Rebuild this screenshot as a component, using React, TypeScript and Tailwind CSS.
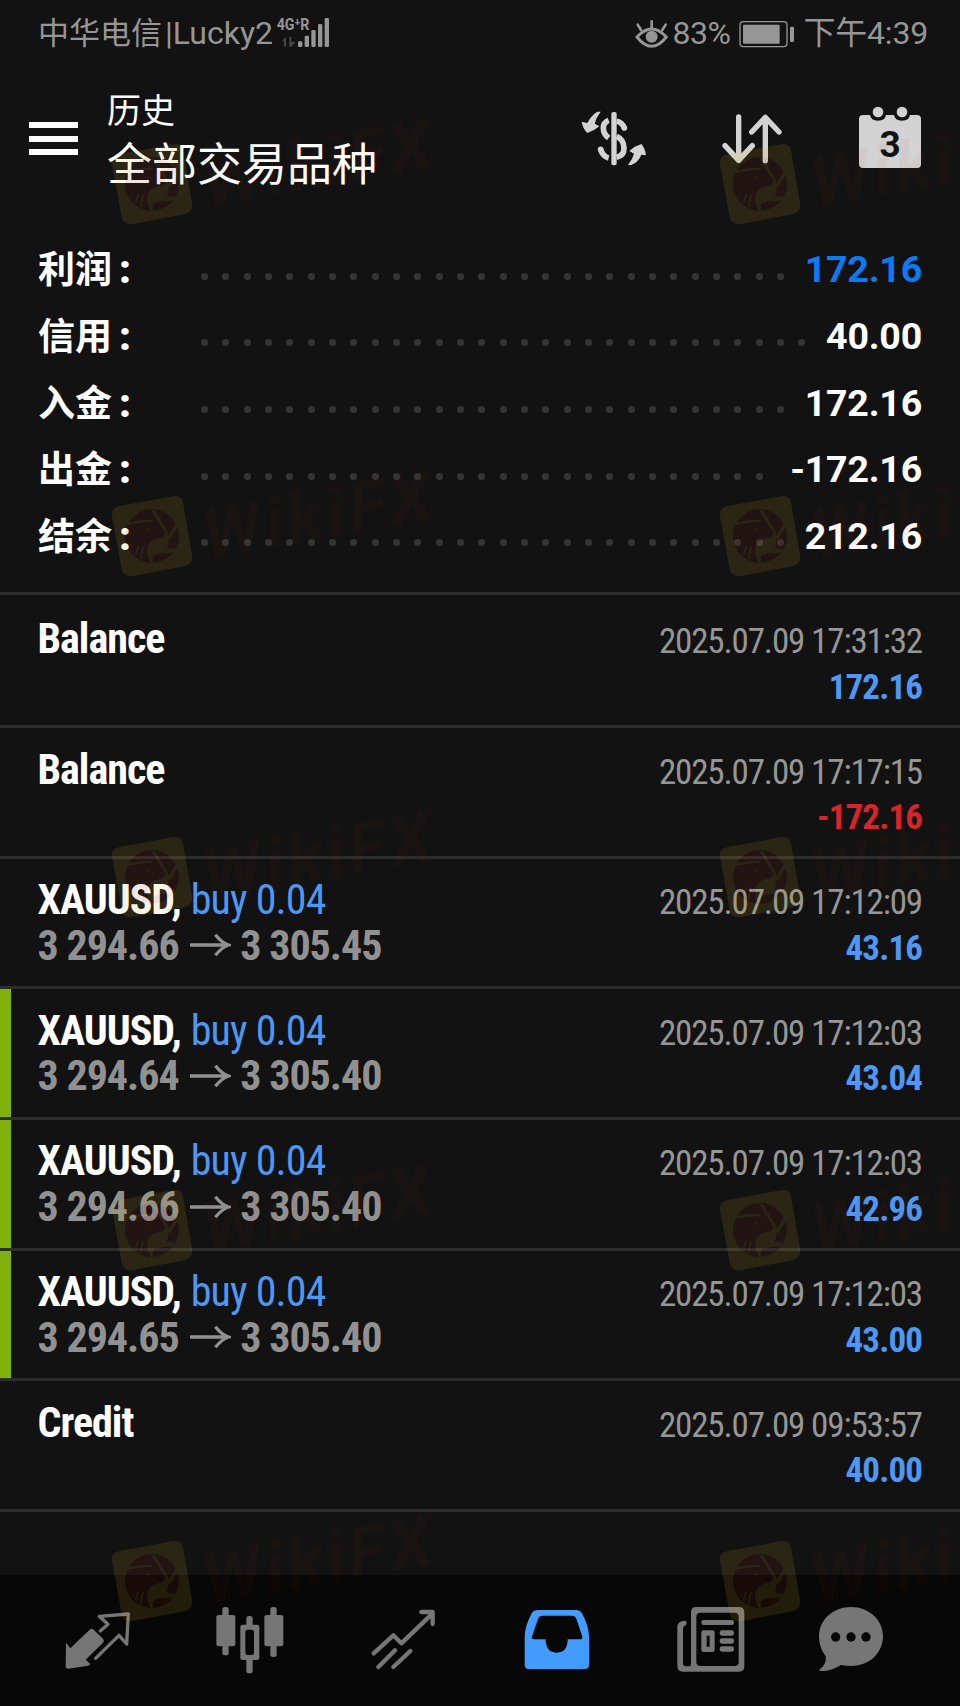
import type { ReactNode } from 'react';
import { clsx } from 'clsx';

type SummaryRow = { label: string; value: string; accent?: boolean };

type Deal = {
  name: string;
  side?: string;
  from?: string;
  to?: string;
  time: string;
  amount: string;
  marked?: boolean;
};

const SUMMARY: SummaryRow[] = [
  { label: '利润', value: '172.16', accent: true },
  { label: '信用', value: '40.00' },
  { label: '入金', value: '172.16' },
  { label: '出金', value: '-172.16' },
  { label: '结余', value: '212.16' },
];

const DEALS: Deal[] = [
  { name: 'Balance', time: '2025.07.09 17:31:32', amount: '172.16' },
  { name: 'Balance', time: '2025.07.09 17:17:15', amount: '-172.16' },
  {
    name: 'XAUUSD,',
    side: 'buy 0.04',
    from: '3 294.66',
    to: '3 305.45',
    time: '2025.07.09 17:12:09',
    amount: '43.16',
  },
  {
    name: 'XAUUSD,',
    side: 'buy 0.04',
    from: '3 294.64',
    to: '3 305.40',
    time: '2025.07.09 17:12:03',
    amount: '43.04',
    marked: true,
  },
  {
    name: 'XAUUSD,',
    side: 'buy 0.04',
    from: '3 294.66',
    to: '3 305.40',
    time: '2025.07.09 17:12:03',
    amount: '42.96',
    marked: true,
  },
  {
    name: 'XAUUSD,',
    side: 'buy 0.04',
    from: '3 294.65',
    to: '3 305.40',
    time: '2025.07.09 17:12:03',
    amount: '43.00',
    marked: true,
  },
  { name: 'Credit', time: '2025.07.09 09:53:57', amount: '40.00' },
];

// top-left corners of the repeated watermark
const MARKS = [144, 496, 837, 1190, 1541].flatMap((top) => [
  { left: 112, top },
  { left: 720, top },
]);

function StatusBar() {
  return (
    <div className="flex h-[67px] items-center pl-[38px] pr-[32px] text-[32px] leading-[67px] text-[#969696]">
      <span className="whitespace-nowrap">
        <span className="mr-[3px] text-[31px]">中华电信</span>|Lucky2
      </span>
      <svg className="ml-[3px] h-[40px] w-[54px] shrink-0" viewBox="828 40 162 120" fill="currentColor">
        <text
          x="830"
          y="89"
          fontSize="50"
          fontWeight="700"
          textLength="98"
          lengthAdjust="spacingAndGlyphs"
        >
          4G⁺R
        </text>
        <path d="M846 122l12-14v30h-6v-16zM868 108h6v16h13l-13 14h-6z" fill="#454545" />
        <rect x="894" y="122" width="13" height="17" rx="4" />
        <rect x="914" y="105" width="13" height="34" rx="4" />
        <rect x="934" y="88" width="13" height="51" rx="4" />
        <rect x="954" y="70" width="13" height="69" rx="4" />
        <rect x="974" y="52" width="13" height="87" rx="4" />
      </svg>
      <div className="flex-1" />
      <svg className="h-[30px] w-[33px]" viewBox="462 53 99 90" fill="none" stroke="currentColor">
        <path d="M468 107q44-48 88 0q-44 56-88 0z" strokeWidth="9" />
        <path d="M512 60v20M470 70l10 16M554 70l-10 16" strokeWidth="8" strokeLinecap="round" />
        <circle cx="512" cy="106" r="18" fill="currentColor" stroke="none" />
      </svg>
      <span className="ml-[5px] tracking-[-0.5px]">83%</span>
      <svg className="ml-[9px] h-[28px] w-[56px]" viewBox="776 54 168 84" fill="currentColor">
        <rect x="779" y="59" width="141" height="75" rx="10" fill="none" stroke="currentColor" strokeWidth="4" />
        <rect x="788" y="68" width="110" height="57" rx="3" />
        <rect x="929" y="74" width="12" height="46" rx="4" />
      </svg>
      <span className="ml-[8px] whitespace-nowrap tracking-[-0.2px]">下午4:39</span>
    </div>
  );
}

function Header() {
  return (
    <header className="flex h-[170px] pl-[29px] pr-[38px]">
      <div className="mt-[55px] flex w-[49px] flex-col gap-[7.5px]">
        <span className="h-[6px] bg-white" />
        <span className="h-[6px] bg-white" />
        <span className="h-[6px] bg-white" />
      </div>
      <div className="ml-[29px] mt-[20px] flex-1 whitespace-nowrap text-white">
        <div className="text-[34px] leading-[48px]">历史</div>
        <h1 className="mt-[2px] text-[45px] leading-[58px]">全部交易品种</h1>
      </div>
      <div className="mt-[39px] flex text-[#d3d3d3]">
        <svg className="h-[64px] w-[66px]" viewBox="301 318 198 192" fill="currentColor">
          <rect x="392" y="336" width="16" height="160" rx="6" />
          <path
            d="M384 361q-16 6-16 23q0 18 16 30M408 409q22 10 22 36q0 22-22 27M384 474q-17-4-24-25M408 364q16 3 23 20"
            fill="none"
            stroke="currentColor"
            strokeWidth="17"
          />
          <circle cx="431" cy="384" r="8.500" />
          <circle cx="360" cy="448" r="8.500" />
          <path d="M360 335q-14 18-18 36l14 8q-16 14-36 20q-14-14-17-34l17 4q12-24 30-34z" />
          <path d="M442 495q14-18 18-34l-14-8q18-16 36-21q12 14 14 34l-14-2q-8 22-30 31z" />
        </svg>
        <svg
          className="ml-[73px] h-[64px] w-[64px]"
          viewBox="720 318 192 192"
          fill="none"
          stroke="currentColor"
          strokeWidth="16"
          strokeLinecap="round"
          strokeLinejoin="round"
        >
          <path d="M776 351v130M735 437l41 44l41-44M856 482V352M815 396l41-44l41 44" />
        </svg>
        <div className="relative ml-[74px] h-[64px] w-[64px]">
          <svg className="h-[64px] w-[64px]" viewBox="1132 318 192 192" fill="currentColor">
            <path d="M1147 345h21q2 17 24 17t24-17h24q2 17 24 17t24-17h21q12 0 12 12v135q0 12-12 12h-162q-12 0-12-12v-135q0-12 12-12z" />
            <circle cx="1192" cy="336" r="16" />
            <circle cx="1264" cy="336" r="16" />
          </svg>
          <span className="absolute inset-x-0 top-[19px] text-center font-['Roboto'] text-[37px] font-bold leading-[40px] text-[#121212]">
            3
          </span>
        </div>
      </div>
    </header>
  );
}

function Summary() {
  return (
    <section className="-mt-[1px] h-[356px] pl-[38px] pr-[38px] text-[37.500px] font-bold text-white">
      {SUMMARY.map((row) => (
        <div key={row.label} className="flex h-[66.67px] items-center leading-[66px]">
          <span className="w-[156px] whitespace-nowrap pt-[4px] text-[37px]">
            {row.label}
            <span className="ml-[7px] text-[40px] font-black leading-none">:</span>
          </span>
          <div className="mr-[7px] mt-[14px] flex h-[8px] flex-1 flex-wrap overflow-hidden">
            {Array.from({ length: 32 }).map((_, i) => (
              <span key={i} className="flex h-[8px] w-[21.33px] items-center justify-center">
                <span className="size-[7px] rounded-full bg-[#353535]" />
              </span>
            ))}
          </div>
          <span className={clsx('tracking-[-0.2px]', row.accent && 'text-[#097cf5]')}>{row.value}</span>
        </div>
      ))}
    </section>
  );
}

function DealRow({ deal, first }: { deal: Deal; first: boolean }) {
  return (
    <li
      className={clsx(
        'relative border-b-[3px] border-[#2d2d2d] pl-[37.5px] pr-[38px]',
        first ? 'h-[133px] pt-[21px]' : 'h-[130.67px] pt-[18.5px]',
      )}
    >
      {deal.marked && <span className="absolute bottom-0 left-0 top-0 w-[11px] bg-[#80b10c]" />}
      <div className="flex h-[45.67px] items-baseline justify-between whitespace-nowrap text-[42px] leading-[45px] tracking-[-1px]">
        <span className="font-bold text-white">
          {deal.name}
          {deal.side && (
            <span className="ml-[1px] font-normal tracking-[-0.8px] text-[#4d98f5]"> {deal.side}</span>
          )}
        </span>
        <span className="text-[35px] tracking-[-1.14px] text-[#969696]">{deal.time}</span>
      </div>
      <div className="flex h-[45.67px] items-baseline justify-between whitespace-nowrap text-[42px] font-bold leading-[45px] tracking-[-1px]">
        {/* the empty case keeps the line's baseline with a blank */}
        <span className="text-[#919191]">
          {deal.from ?? '\u00a0'}
          {deal.from && (
            <svg
              className="mb-[2.5px] ml-[10.5px] mr-[9px] inline-block h-[24px] w-[42px] align-baseline"
              viewBox="568 1058 126 72"
              fill="none"
              stroke="currentColor"
            >
              <path d="M571 1094h112" strokeWidth="11" />
              <path d="M647 1063q20 25 40 31q-20 6-40 31" strokeWidth="10" />
            </svg>
          )}
          {deal.to}
        </span>
        <span
          className={clsx(
            'text-[35px] tracking-[-0.9px]',
            deal.amount.startsWith('-') ? 'text-[#d9242a]' : 'text-[#4d98f5]',
          )}
        >
          {deal.amount}
        </span>
      </div>
    </li>
  );
}

function NavIcon({ className, x, w, children }: { className: string; x: number; w: number; children: ReactNode }) {
  return (
    <svg className={clsx('h-[72px] shrink-0', className)} viewBox={`${x} 102 ${w} 216`} fill="currentColor">
      {children}
    </svg>
  );
}

function BottomNav() {
  return (
    <nav className="flex h-[131px] bg-[#070707] pl-[64px] pt-[28.5px] text-[#767676]">
      <NavIcon className="w-[68px]" x={192} w={204}>
        <path d="M198 218l13 17l58-56q6-5 12 0l28 27q5 6 0 12l-52 51l14 13q-1 4-7 5l-58 9q-9 1-9-8z" />
        <path
          d="M301 183l23-20l-26-24l87-7l-5 90l-23-26l-70 69"
          fill="none"
          stroke="currentColor"
          strokeWidth="10"
          strokeLinejoin="round"
          strokeLinecap="round"
        />
      </NavIcon>
      <NavIcon className="ml-[83px] w-[70px]" x={647} w={210}>
        <rect x="669" y="111" width="19" height="145" rx="8" />
        <rect x="651" y="135" width="57" height="94" rx="7" />
        <rect x="813" y="111" width="19" height="150" rx="8" />
        <rect x="795" y="135" width="57" height="94" rx="7" />
        <rect x="741" y="138" width="19" height="172" rx="8" />
        <rect x="723" y="164" width="57" height="106" rx="7" />
        <rect x="738" y="179" width="26" height="76" rx="7" fill="#070707" />
      </NavIcon>
      <NavIcon className="ml-[84.5px] w-[68px]" x={1110} w={204}>
        <path
          d="M1121 250l59-54l24 24l94-90M1264 126h34v36M1135 291l50-50M1180 291l51-48"
          fill="none"
          stroke="currentColor"
          strokeWidth="13"
          strokeLinejoin="round"
          strokeLinecap="round"
        />
      </NavIcon>
      <NavIcon className="ml-[85.5px] w-[68px] text-[#429cfd]" x={129} w={204}>
        <path
          fillRule="evenodd"
          d="M172 120h118q10 0 15 8q22 40 22 72v84q0 13-12 13h-169q-12 0-12-13v-84q0-32 22-72q5-8 16-8zM187 137q-8 0-12 7l-20 58q0 6 7 6h35q0 40 33 40t33-40h37q8 0 7-8l-18-54q-4-9-13-9z"
        />
      </NavIcon>
      <NavIcon className="ml-[85px] w-[70px]" x={589} w={210}>
        <path
          fillRule="evenodd"
          d="M650 111h128q16 0 16 16v162q0 16-16 16h-168q-17 0-17-17v-116q0-20 22-20q6 0 6 7t-6 8q-5 1-5 10v103q0 9 8 9h10q6 0 6-8v-154q0-16 16-16zM663 128q-13 0-13 12v136q0 12 12 12h103q12 0 12-12v-136q0-12-12-12z"
        />
        <rect x="665" y="150" width="98" height="15" rx="7" />
        <rect x="720" y="181" width="43" height="16" rx="7" />
        <rect x="720" y="205" width="43" height="16" rx="7" />
        <rect x="720" y="229" width="43" height="16" rx="7" />
        <path fillRule="evenodd" d="M672 181h26q7 0 7 7v51q0 7-7 7h-26q-7 0-7-7v-51q0-7 7-7zM681 197v33h9v-33z" />
      </NavIcon>
      <NavIcon className="ml-[71px] w-[68px]" x={1013} w={204}>
        <path d="M1115 111c54 0 96 39 96 88s-40 89-94 89q-17 0-32-3q-32 20-62 18q-5-1-2-5q22-15 18-40q-20-25-20-59c0-49 42-88 96-88z" />
        <g fill="#070707">
          <circle cx="1069" cy="201" r="14" />
          <circle cx="1115" cy="201" r="14" />
          <circle cx="1160" cy="201" r="14" />
        </g>
      </NavIcon>
    </nav>
  );
}

/** Eagle tile plus the tilted word next to it, laid over the whole page. */
function Watermark({ left, top }: { left: number; top: number }) {
  return (
    <div className="absolute flex w-[340px]" style={{ left: left - 1, top: top - 1 }}>
      <svg className="h-[82px] w-[82px] shrink-0" viewBox="718 430 246 246">
        <g opacity="0.12">
          <path
            fillRule="evenodd"
            fill="#e0b828"
            d="M745 463l158-29q26-6 31 19l27 157q4 26-22 34l-156 29q-28 5-33-22l-29-159q-3-24 24-29zM840 473a80 80 0 1 0 1 0z"
          />
          <path fill="#8c2418" d="M840 473a80 80 0 1 0 1 0z" />
          <g fill="#e0b828">
            <path d="M873 556q10-8 12-18l8 16l-8 36l26 1l-4 11l-50 4q-18 4-12 28l-6 2q-14-22-12-46q4-24 32-30q8 0 14-4z" />
            <path d="M838 474l12 2l38 62l-5 8zM762 514q32-10 84-10l-6 6q-44 2-80 12zM916 508l6 10l-26 44l-10-4zM822 533l14 0l-8 5z" />
            <path d="M806 622q-2-20 8-38l4 2q-8 18-8 38zM790 610q0-14 10-26l3 3q-8 12-9 26z" />
          </g>
        </g>
      </svg>
      <span className="ml-[8px] mt-[-22px] h-[84px] origin-center rotate-[-10deg] font-['Roboto'] text-[70px] font-bold italic leading-[84px] tracking-[4px] text-[#a03018]/5">
        WikiFX
      </span>
    </div>
  );
}

export default function App() {
  return (
    <div className="relative flex h-[1706px] w-[960px] flex-col overflow-hidden bg-[#121212] font-['Roboto','Noto_Sans_CJK_SC',sans-serif]">
      <StatusBar />
      <Header />
      <Summary />
      <ul className="flex-1 border-t-[3px] border-[#2d2d2d] font-['Roboto_Condensed','Roboto',sans-serif]">
        {DEALS.map((deal, i) => (
          <DealRow key={i} deal={deal} first={i === 0} />
        ))}
      </ul>
      <BottomNav />
      <div className="pointer-events-none absolute inset-0 overflow-hidden">
        {MARKS.map((mark) => (
          <Watermark key={`${mark.left}-${mark.top}`} left={mark.left} top={mark.top} />
        ))}
      </div>
    </div>
  );
}
